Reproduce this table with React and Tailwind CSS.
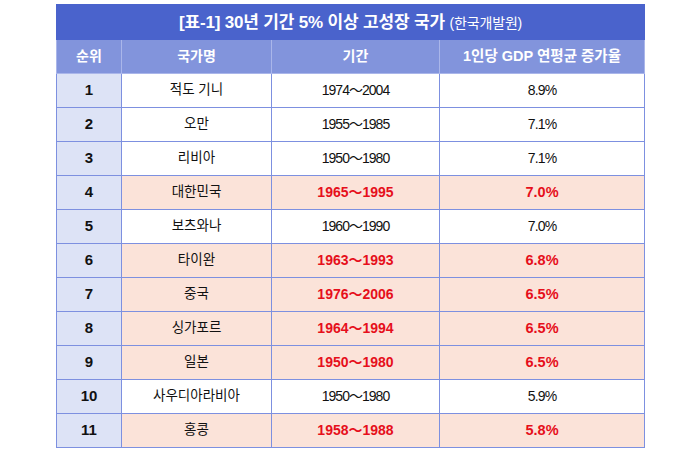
const rows = [
  ["1", "적도 기니", "1974～2004", "8.9%", false],
  ["2", "오만", "1955～1985", "7.1%", false],
  ["3", "리비아", "1950～1980", "7.1%", false],
  ["4", "대한민국", "1965～1995", "7.0%", true],
  ["5", "보츠와나", "1960～1990", "7.0%", false],
  ["6", "타이완", "1963～1993", "6.8%", true],
  ["7", "중국", "1976～2006", "6.5%", true],
  ["8", "싱가포르", "1964～1994", "6.5%", true],
  ["9", "일본", "1950～1980", "6.5%", true],
  ["10", "사우디아라비아", "1950～1980", "5.9%", false],
  ["11", "홍콩", "1958～1988", "5.8%", true],
];

export default function App() {
  return (
    <div
      className="w-[700px] h-[455px] bg-white pt-[4px] pl-[56px]"
      style={{ fontFamily: '"Liberation Sans", "Noto Sans CJK KR", sans-serif' }}
    >
      <table className="border-collapse w-[588px] table-fixed text-[13px] text-[#111]">
        <colgroup>
          <col className="w-[65px]" />
          <col className="w-[150px]" />
          <col className="w-[168px]" />
          <col className="w-[205px]" />
        </colgroup>
        <thead>
          <tr>
            <th
              colSpan={4}
              className="h-[35px] bg-[#4a63cc] text-white text-[17px] font-bold border border-[#4a63cc] leading-none tracking-[-0.01em]"
            >
              [표-1] 30년 기간 5% 이상 고성장 국가{" "}
              <span className="text-[14px] font-normal">(한국개발원)</span>
            </th>
          </tr>
          <tr className="bg-[#8294dc] text-white text-[14px] font-bold">
            <th className="h-[34px] border border-[#aab6ea]">순위</th>
            <th className="border border-[#aab6ea]">국가명</th>
            <th className="border border-[#aab6ea]">기간</th>
            <th className="border border-[#aab6ea] text-[14.5px]">1인당 GDP 연평균 증가율</th>
          </tr>
        </thead>
        <tbody>
          {rows.map(([no, name, period, rate, hi]) => (
            <tr key={no} className={hi ? "bg-[#fbe3d9]" : "bg-white"}>
              <td className="h-[34px] bg-[#dde3f6] border border-[#7d90e0] text-center font-bold text-[15px]">
                {no}
              </td>
              <td className="border border-[#7d90e0] text-center text-[13.5px]">{name}</td>
              <td
                className={
                  hi
                    ? "border border-[#7d90e0] text-center text-[#e60f1b] font-bold text-[14px]"
                    : "border border-[#7d90e0] text-center text-[14px] tracking-[-0.07em]"
                }
              >
                {period}
              </td>
              <td
                className={
                  hi
                    ? "border border-[#7d90e0] text-center text-[#e60f1b] font-bold text-[14.5px]"
                    : "border border-[#7d90e0] text-center text-[14px] tracking-[-0.06em]"
                }
              >
                {rate}
              </td>
            </tr>
          ))}
        </tbody>
      </table>
    </div>
  );
}
